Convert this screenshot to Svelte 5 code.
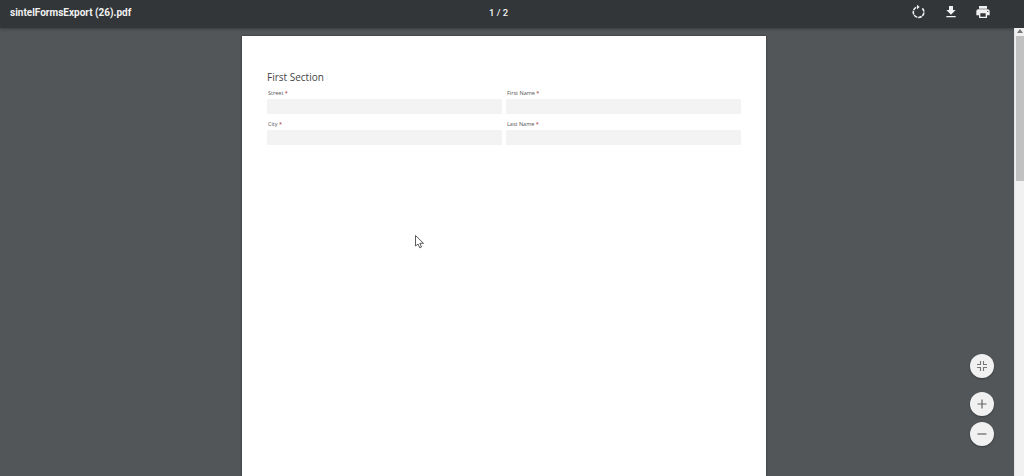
<script>
  const fields = ['Street', 'First Name', 'City', 'Last Name'];
</script>

<div class="viewer">
  <header class="toolbar">
    <div class="title">sintelFormsExport (26).pdf</div>
    <div class="pages">1 / 2</div>
    <div class="actions">
      <svg width="16" height="16" viewBox="0 0 24 24" fill="none" stroke="#f1f1f1" stroke-width="2.4">
        <path d="M17 6.5A8 8 0 1 1 9.500 4.400" stroke-dasharray="5.500 1.200" />
        <path d="M9 1v7l4-3.500z" fill="#f1f1f1" stroke="none" />
      </svg>
      <svg width="16" height="16" viewBox="0 0 24 24" fill="#f1f1f1">
        <path d="M19 9h-4V3H9v6H5l7 7 7-7zM5 18v2h14v-2H5z" />
      </svg>
      <svg width="16" height="16" viewBox="0 0 24 24" fill="#f1f1f1">
        <path d="M19 8H5c-1.660 0-3 1.340-3 3v6h4v4h12v-4h4v-6c0-1.660-1.340-3-3-3zm-3 11H8v-5h8v5zm3-7c-.550 0-1-.450-1-1s.450-1 1-1 1 .450 1 1-.450 1-1 1zm-1-9H6v4h12V3z" />
      </svg>
    </div>
  </header>

  <div class="body">
    <main class="canvas">
      <section class="page">
        <h2>First Section</h2>
        <div class="grid">
          {#each fields as field}
            <div class="field">
              <span class="label">{field} <i>*</i></span>
              <div class="input"></div>
            </div>
          {/each}
        </div>
      </section>
    </main>

    <div class="scrollbar">
      <div class="arrow"></div>
      <div class="thumb"></div>
    </div>

    <svg class="cursor" width="10" height="14" viewBox="0 0 10 14">
      <path d="M.5.500v10.500l2.500-2 1.700 3.800 1.800-.8L4.900 8.300H8.500z" fill="#fff" stroke="#333" stroke-width=".8" />
    </svg>

    <div class="fabs">
      <button class="fab fit" aria-label="Fit to page">
        <svg width="12" height="12" viewBox="0 0 12 12" fill="none" stroke="#777" stroke-width="1.100">
          <path d="M4.500 1v3.500H1M7.500 1v3.500H11M4.500 11V7.500H1M7.500 11V7.500H11" />
        </svg>
      </button>
      <button class="fab" aria-label="Zoom in">
        <svg width="12" height="12" viewBox="0 0 12 12" stroke="#666" stroke-width="1.200">
          <path d="M1.500 6h9M6 1.500v9" />
        </svg>
      </button>
      <button class="fab" aria-label="Zoom out">
        <svg width="12" height="12" viewBox="0 0 12 12" stroke="#666" stroke-width="1.200">
          <path d="M1.500 6h9" />
        </svg>
      </button>
    </div>
  </div>
</div>

<style>
  :global(body) {
    margin: 0;
    overflow: hidden;
  }
  .viewer {
    display: flex;
    flex-direction: column;
    width: 1024px;
    height: 476px;
    overflow: hidden;
    background: #525659;
    font-family: Roboto, "Liberation Sans", sans-serif;
  }
  .toolbar {
    display: grid;
    grid-template-columns: 1fr auto 1fr;
    align-items: center;
    flex: none;
    height: 28px;
    padding: 0 33px 0 10px;
    background: #323639;
    box-shadow: 0 1px 3px rgba(0, 0, 0, 0.3);
    color: #f1f1f1;
    font-size: 10px;
    position: relative;
  }
  .title {
    font-weight: 700;
    position: relative;
    top: -2px;
  }
  .pages {
    position: relative;
    top: -2px;
    left: -2px;
    font-weight: 500;
    font-size: 9.500px;
  }
  .actions {
    display: flex;
    justify-content: flex-end;
    gap: 16px;
    position: relative;
    top: -2px;
  }
  .body {
    display: flex;
    flex: 1;
    min-height: 0;
    position: relative;
  }
  .canvas {
    flex: 1;
    padding: 8px 0 0 242px;
    overflow: hidden;
  }
  .page {
    width: 474px;
    height: 520px;
    padding: 34px 25px 0;
    background: #fff;
    box-shadow: 0 0 2px rgba(0, 0, 0, 0.4);
    font-family: "Open Sans", "Liberation Sans", sans-serif;
  }
  h2 {
    margin: 0 0 5px;
    font-size: 10px;
    line-height: 14px;
    font-weight: 400;
    color: #444;
  }
  .grid {
    display: grid;
    grid-template-columns: 235px 235px;
    column-gap: 4px;
    row-gap: 6px;
  }
  .label {
    display: block;
    height: 10px;
    font-size: 5.500px;
    line-height: 8px;
    color: #555;
    padding-left: 1px;
  }
  .label i {
    font-style: normal;
    color: #a4262c;
  }
  .input {
    height: 15px;
    background: #f3f3f3;
  }
  .scrollbar {
    flex: none;
    width: 9px;
    display: flex;
    flex-direction: column;
    background: #f1f1f1;
    border-left: 1px solid #e4e4e4;
  }
  .arrow {
    height: 0;
    width: 0;
    margin: 1px auto 3px;
    border: 3px solid transparent;
    border-top: 0;
    border-bottom: 4px solid #777;
  }
  .thumb {
    height: 145px;
    background: #c1c1c1;
    margin-left: 1px;
  }
  .cursor {
    position: absolute;
    left: 415px;
    top: 207px;
  }
  .fabs {
    position: absolute;
    left: 970px;
    top: 326px;
    display: flex;
    flex-direction: column;
    gap: 6px;
  }
  .fab {
    display: flex;
    align-items: center;
    justify-content: center;
    width: 24px;
    height: 24px;
    padding: 0;
    border: 0;
    border-radius: 50%;
    background: #f1f1f1;
    box-shadow: 0 1px 2px rgba(0, 0, 0, 0.3);
  }
  .fit {
    margin-bottom: 8px;
  }
</style>
